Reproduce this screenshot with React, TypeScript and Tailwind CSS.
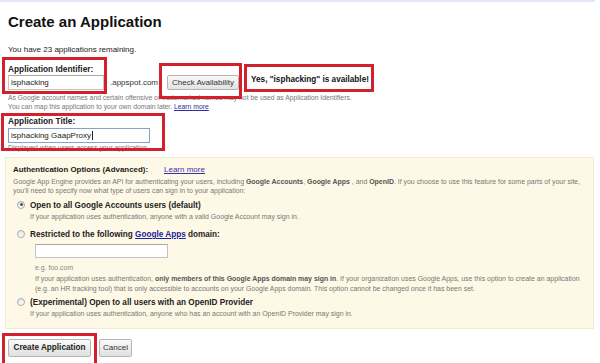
import React from "react";

function Radio({ checked }: { checked?: boolean }) {
  return (
    <span className="flex h-[8px] w-[8px] shrink-0 items-center justify-center rounded-full border border-[#a8a8a8] bg-gradient-to-b from-[#e6e6e6] to-[#fdfdfd]">
      {checked ? <span className="h-[3px] w-[3px] rounded-full bg-[#555]" /> : null}
    </span>
  );
}

export default function App() {
  return (
    <div className="relative h-[363px] w-[600px] overflow-hidden bg-white font-['Liberation_Sans',Arial,sans-serif] text-[#222]">
      <div className="h-[2px] w-[595px] bg-[#e2e8f6]" />
      <div className="pl-[8px]">
        <h1 className="mt-[11px] text-[15px] font-bold leading-[18px] text-[#111]">Create an Application</h1>
        <p className="mt-[14px] text-[8px] leading-[10px]">You have 23 applications remaining.</p>
        <div className="mt-[9px] text-[8.3px] font-bold leading-[10px]">Application Identifier:</div>
        <div className="mt-[1px] flex h-[15px] items-center">
          <div className="flex h-[15px] w-[96px] items-center border border-[#c6c6c6] border-t-[#a8a8a8] bg-white pl-[2px] text-[8px]">isphacking</div>
          <span className="ml-[6px] text-[8px] text-[#333]">.appspot.com</span>
          <button className="ml-[9px] flex h-[15px] w-[72px] items-center justify-center rounded-[2px] border border-[#b4b4b4] bg-gradient-to-b from-[#fafafa] to-[#e2e2e2] text-[8px] text-[#333]">Check Availability</button>
          <span className="ml-[12px] mt-[-4px] text-[8.2px] font-bold text-[#111]">Yes, "isphacking" is available!</span>
        </div>
        <p className="mt-[3px] whitespace-nowrap text-[6.8px] leading-[9px] text-[#777]">As Google account names and certain offensive or trademarked names may not be used as Application Identifiers.</p>
        <p className="whitespace-nowrap text-[6.8px] leading-[10px] text-[#777]">
          You can map this application to your own domain later. <span className="text-[#2d2d9f] underline">Learn more</span>
        </p>
        <div className="mt-[4px] text-[8.3px] font-bold leading-[10px]">Application Title:</div>
        <div className="mt-[2px] flex h-[15px] w-[142px] items-center border border-[#86a2c4] bg-white pl-[2px] text-[8px]">
          isphacking GaapProxy<span className="ml-[1px] h-[9px] w-[1px] bg-[#222]" />
        </div>
        <p className="whitespace-nowrap text-[6.8px] leading-[9px] text-[#777]">Displayed when users access your application.</p>
      </div>

      <div className="ml-[5px] mt-[5px] box-border h-[172px] w-[589px] border border-[#f4ecd2] bg-[#fef9e6] pl-[7px] pt-[7px]">
        <div className="flex items-baseline leading-[10px]">
          <span className="text-[7.9px] font-bold text-[#222]">Authentication Options (Advanced):</span>
          <span className="ml-[16px] text-[8px] text-[#3a2fa8] underline">Learn more</span>
        </div>
        <div className="mt-[2px] whitespace-nowrap text-[6.95px] leading-[9px] text-[#777]">
          Google App Engine provides an API for authenticating your users, including <b className="text-[#555]">Google Accounts</b>, <b className="text-[#555]">Google Apps</b> , and <b className="text-[#555]">OpenID</b>. If you choose to use this feature for some parts of your site,
        </div>
        <div className="whitespace-nowrap text-[6.95px] leading-[9px] text-[#777]">you'll need to specify now what type of users can sign in to your application:</div>

        <div className="ml-[4px] mt-[6px] flex h-[10px] items-center">
          <span className="-mt-[3px]"><Radio checked /></span>
          <span className="ml-[5px] text-[8.2px] font-bold leading-[10px]">Open to all Google Accounts users (default)</span>
        </div>
        <div className="ml-[17px] mt-[1px] whitespace-nowrap text-[6.95px] leading-[9px] text-[#777]">If your application uses authentication, anyone with a valid Google Account may sign in.</div>

        <div className="ml-[4px] mt-[9px] flex h-[10px] items-center">
          <span className="-mt-[2px]"><Radio /></span>
          <span className="ml-[5px] text-[8.2px] font-bold leading-[10px]">
            Restricted to the following <span className="text-[#2020a0] underline">Google Apps</span> domain:
          </span>
        </div>
        <div className="ml-[22px] mt-[4px] h-[14px] w-[133px] border border-[#c2c2c2] border-t-[#a6a6a6] bg-white" />
        <div className="ml-[22px] mt-[5px] text-[6.95px] leading-[9px] text-[#888]">e.g. foo.com</div>
        <div className="ml-[22px] mt-[2px] whitespace-nowrap text-[6.95px] leading-[10px] text-[#777]">
          If your application uses authentication, <b className="text-[#555]">only members of this Google Apps domain may sign in</b>. If your organization uses Google Apps, use this option to create an application
        </div>
        <div className="ml-[22px] whitespace-nowrap text-[6.95px] leading-[10px] text-[#777]">
          (e.g. an HR tracking tool) that is only accessible to accounts on your Google Apps domain. This option cannot be changed once it has been set.
        </div>

        <div className="ml-[4px] mt-[4px] flex h-[10px] items-center">
          <span className="-mt-[2px]"><Radio /></span>
          <span className="ml-[5px] text-[8.2px] font-bold leading-[10px]">(Experimental) Open to all users with an OpenID Provider</span>
        </div>
        <div className="ml-[17px] mt-[1px] whitespace-nowrap text-[6.95px] leading-[9px] text-[#777]">If your application uses authentication, anyone who has an account with an OpenID Provider may sign in.</div>
      </div>

      <div className="ml-[8px] mt-[10px] flex gap-[8px]">
        <button className="flex h-[18px] w-[83px] items-center justify-center rounded-[2px] border border-[#b4b4b4] bg-gradient-to-b from-[#fafafa] to-[#e0e0e0] text-[8.2px] font-bold text-[#222]">Create Application</button>
        <button className="flex h-[18px] w-[33px] items-center justify-center rounded-[2px] border border-[#b4b4b4] bg-gradient-to-b from-[#fafafa] to-[#e0e0e0] text-[8px] text-[#333]">Cancel</button>
      </div>

      {/* red annotation boxes */}
      <div className="pointer-events-none absolute left-[2px] top-[57px] h-[37px] w-[105px] border-[3px] border-[#d2202c]" />
      <div className="pointer-events-none absolute left-[159px] top-[63px] h-[36px] w-[83px] border-[3px] border-[#d2202c]" />
      <div className="pointer-events-none absolute left-[244px] top-[64px] h-[28px] w-[130px] border-[3px] border-[#d2202c]" />
      <div className="pointer-events-none absolute left-[1px] top-[113px] h-[38px] w-[164px] border-[3px] border-[#d2202c]" />
      <div className="pointer-events-none absolute left-[2px] top-[333px] h-[34px] w-[95px] border-[3px] border-[#d2202c]" />
    </div>
  );
}
